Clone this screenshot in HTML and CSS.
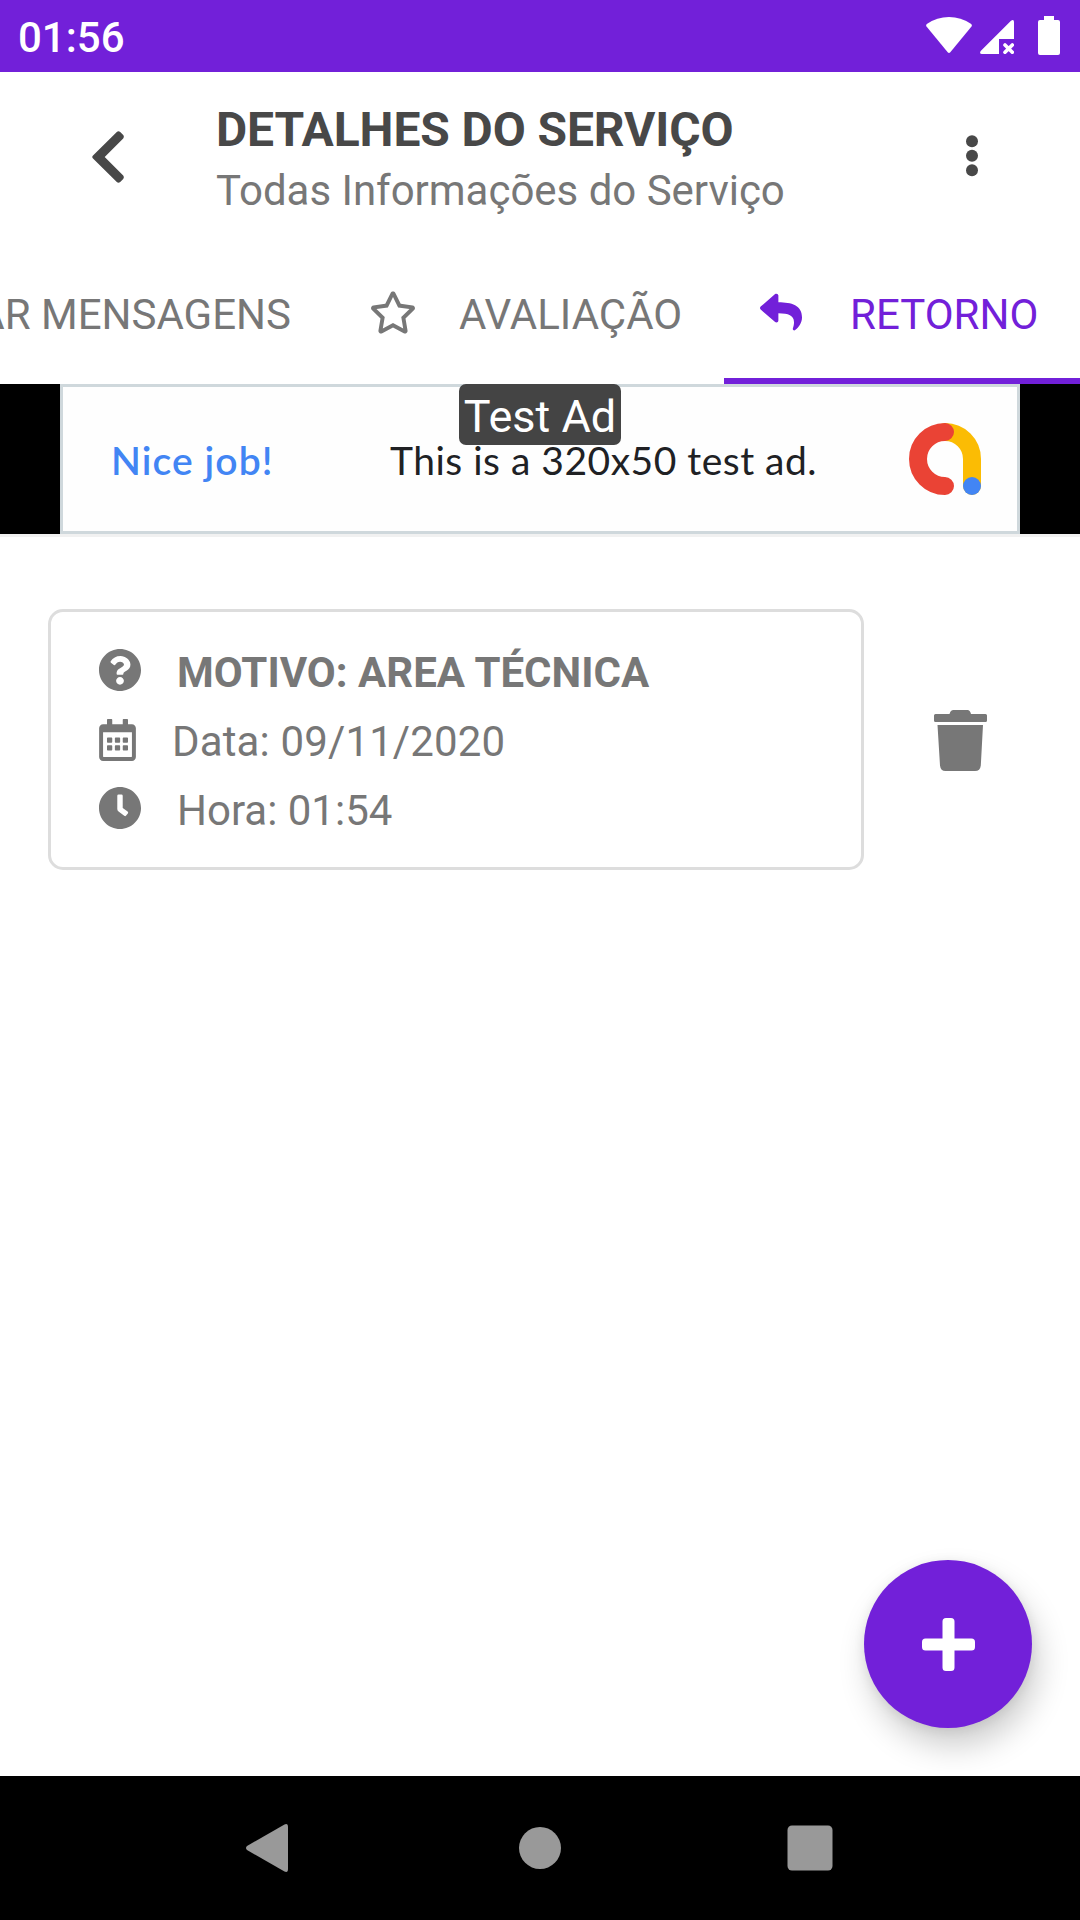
FILE: index.html
```html
<!DOCTYPE html>
<html lang="pt-BR">
<head>
<meta charset="utf-8">
<title>Detalhes do Serviço</title>
<link rel="stylesheet" href="styles.css">
</head>
<body>
<div class="screen">
  <div class="status">
    <span class="time">01:56</span>
    <svg class="wifi" width="46" height="37" viewBox="0 0 46 37"><path d="M.5 9.500Q-.5 8 1.200 6.800Q11 0 23 0T44.800 6.800Q46.500 8 45.500 9.500L24.300 35.300Q23 36.700 21.700 35.300Z"/></svg>
    <svg class="signal" width="34" height="34" viewBox="0 0 34 34"><path d="M31 .7Q34-1 34 2V19H19V34H2Q-1 34 .7 31Z"/><path class="cross" d="M25 25L32.300 32.300M32.300 25L25 32.300"/></svg>
    <svg class="battery" width="22" height="39" viewBox="0 0 22 39"><path d="M6 0H16V4H20Q22 4 22 6V37Q22 39 20 39H2Q0 39 0 37V6Q0 4 2 4H6Z"/></svg>
  </div>
  <header class="header">
    <svg class="back" width="32" height="52" viewBox="0 0 32 52"><path d="M24.800 .9Q26.500-.3 28.200 1L31.200 4Q32.500 5.600 31.200 7.400L12.700 26L31.200 44.600Q32.500 46.400 31.200 48L28.200 51Q26.500 52.300 24.800 51.100L1 27.600Q-.5 26 1 24.400Z"/></svg>
    <div class="titles">
      <h1>DETALHES DO SERVIÇO</h1>
      <p>Todas Informações do Serviço</p>
    </div>
    <svg class="more" width="12" height="42" viewBox="0 0 12 42"><circle cx="6" cy="6.200" r="6"/><circle cx="6" cy="20.700" r="6"/><circle cx="6" cy="35.200" r="6"/></svg>
  </header>
  <nav class="tabs">
    <div class="tab messages"><span>ENVIAR MENSAGENS</span></div>
    <div class="tab rating">
      <svg width="44" height="43" viewBox="20 0 536 512"><path d="M528.100 171.500L382 150.200 316.700 17.800c-11.700-23.600-45.600-23.900-57.400 0L194 150.200 47.900 171.500c-26.200 3.800-36.700 36.100-17.700 54.600l105.700 103-25 145.500c-4.500 26.300 23.200 46 46.400 33.700L288 439.600l130.700 68.700c23.200 12.200 50.900-7.400 46.400-33.700l-25-145.500 105.700-103c19-18.500 8.500-50.800-17.700-54.600zM388.600 312.300l23.700 138.400L288 385.400l-124.300 65.300 23.700-138.400-100.600-98 139-20.200 62.200-126 62.200 126 139 20.200-100.600 98z"/></svg>
      <span>AVALIAÇÃO</span>
    </div>
    <div class="tab return">
      <svg width="42" height="38" viewBox="0 32 512 448"><path d="M8.309 189.836L184.313 37.851C199.719 24.546 224 35.347 224 56.015v80.053c160.629 1.839 288 34.032 288 186.258 0 61.441-39.581 122.309-83.333 154.132-13.653 9.931-33.111-2.533-28.077-18.631 45.344-145.012-21.507-183.510-176.590-185.742V360c0 20.700-24.300 31.453-39.687 18.164l-176.004-152c-11.071-9.562-11.086-26.753 0-36.328z"/></svg>
      <span>RETORNO</span>
    </div>
  </nav>
  <div class="ad-strip">
    <div class="ad">
      <span class="nice">Nice job!</span>
      <span class="copy">This is a 320x50 test ad.</span>
      <svg class="admob" width="72" height="72" viewBox="0 0 72 72"><path class="yellow" d="M36 9A27 27 0 0 1 63 36V63"/><path class="red" d="M36 9A27 27 0 0 0 36 63"/><circle cx="63" cy="63" r="9"/></svg>
    </div>
    <div class="badge">Test Ad</div>
  </div>
  <main class="content">
    <section class="card">
      <div class="row bold"><svg width="42" height="42" viewBox="8 8 496 496"><path d="M504 256c0 136.997-111.043 248-248 248S8 392.997 8 256C8 119.083 119.043 8 256 8s248 111.083 248 248zM262.655 90c-54.497 0-89.255 22.957-116.549 63.758-3.536 5.286-2.353 12.415 2.715 16.258l34.699 26.310c5.205 3.947 12.621 3.008 16.665-2.122 17.864-22.658 30.113-35.797 57.303-35.797 20.429 0 45.698 13.148 45.698 32.958 0 14.976-12.363 22.667-32.534 33.976C247.128 238.528 216 254.941 216 296v4c0 6.627 5.373 12 12 12h56c6.627 0 12-5.373 12-12v-1.333c0-28.462 83.186-29.647 83.186-106.667 0-58.002-60.165-102-116.531-102zM256 338c-25.365 0-46 20.635-46 46 0 25.364 20.635 46 46 46s46-20.636 46-46c0-25.365-20.635-46-46-46z"/></svg><span>MOTIVO: AREA TÉCNICA</span></div>
      <div class="row date"><svg class="calendar" width="37" height="42" viewBox="0 0 448 512"><path d="M148 288h-40c-6.600 0-12-5.400-12-12v-40c0-6.600 5.400-12 12-12h40c6.600 0 12 5.400 12 12v40c0 6.600-5.400 12-12 12zm108-12v-40c0-6.600-5.400-12-12-12h-40c-6.600 0-12 5.400-12 12v40c0 6.600 5.400 12 12 12h40c6.600 0 12-5.400 12-12zm96 0v-40c0-6.600-5.400-12-12-12h-40c-6.600 0-12 5.400-12 12v40c0 6.600 5.400 12 12 12h40c6.600 0 12-5.400 12-12zm-96 96v-40c0-6.600-5.400-12-12-12h-40c-6.600 0-12 5.400-12 12v40c0 6.600 5.400 12 12 12h40c6.600 0 12-5.400 12-12zm-96 0v-40c0-6.600-5.400-12-12-12h-40c-6.600 0-12 5.400-12 12v40c0 6.600 5.400 12 12 12h40c6.600 0 12-5.400 12-12zm192 0v-40c0-6.600-5.400-12-12-12h-40c-6.600 0-12 5.400-12 12v40c0 6.600 5.400 12 12 12h40c6.600 0 12-5.400 12-12zm96-260v352c0 26.500-21.500 48-48 48H48c-26.500 0-48-21.500-48-48V112c0-26.500 21.500-48 48-48h48V12c0-6.600 5.400-12 12-12h40c6.600 0 12 5.400 12 12v52h128V12c0-6.600 5.400-12 12-12h40c6.600 0 12 5.400 12 12v52h48c26.500 0 48 21.500 48 48zm-48 346V160H48v298c0 3.300 2.700 6 6 6h340c3.300 0 6-2.700 6-6z"/></svg><span>Data: 09/11/2020</span></div>
      <div class="row"><svg width="42" height="42" viewBox="8 8 496 496"><path d="M256 8C119 8 8 119 8 256s111 248 248 248 248-111 248-248S393 8 256 8zm92.490 313l-20 25a16 16 0 0 1-22.490 2.500l-67-49.720a40 40 0 0 1-15-31.230V112a16 16 0 0 1 16-16h32a16 16 0 0 1 16 16v144l58 42.500a16 16 0 0 1 2.490 22.500z"/></svg><span>Hora: 01:54</span></div>
    </section>
    <svg class="trash" width="53" height="61" viewBox="0 0 53 61"><path d="M1.500 4H15.500Q16.500 0 19.500 0H33.500Q36 0 37 4H51.500Q53 4 53 5.500V10.500Q53 12 51.500 12H1.500Q0 12 0 10.500V5.500Q0 4 1.500 4ZM3.500 15H49L46.800 55.500Q46.200 61 41 61H11.500Q6.600 61 6 55.500Z"/></svg>
    <div class="fab"><svg width="53" height="53" viewBox="0 0 53 53"><path d="M24 0H29Q32.500 0 32.500 3.500V20.500H49.500Q53 20.500 53 24V29Q53 32.500 49.500 32.500H32.500V49.500Q32.500 53 29 53H24Q20.500 53 20.500 49.500V32.500H3.500Q0 32.500 0 29V24Q0 20.500 3.500 20.500H20.500V3.500Q20.500 0 24 0Z"/></svg></div>
  </main>
  <footer class="system-nav">
    <svg width="42" height="48" viewBox="0 0 42 48"><path d="M38.500 .5Q42-1 42 3V45Q42 49 38.500 47.500L1 26Q-1 24 1 22Z"/></svg>
    <svg class="home" width="42" height="42" viewBox="0 0 42 42"><circle cx="21" cy="21" r="21"/></svg>
    <svg width="46" height="46" viewBox="0 0 46 46"><rect x=".5" y=".5" width="45" height="45" rx="4.500"/></svg>
  </footer>
</div>
</body>
</html>
```
FILE: styles.css
```css
* { box-sizing: border-box; }
body { margin: 0; font-family: Roboto, sans-serif; color: #777; font-size: 42px; }
h1, p { margin: 0; }
svg { display: block; flex: none; fill: currentColor; }
.screen { width: 1080px; height: 1920px; display: flex; flex-direction: column; background: #fff; overflow: hidden; }

.status { height: 72px; flex: none; background: #7220d9; color: #fff; display: flex; padding: 0 20px 0 18px; align-items: flex-start; }
.time { font-weight: 500; line-height: 49px; margin: 13px auto 0 0; }
.wifi { margin: 17px 8px 0 0; }
.signal { margin: 20px 24px 0 0; }
.cross { stroke: #fff; stroke-width: 3.600; stroke-linecap: round; fill: none; }
.battery { margin-top: 16px; }

.header { height: 168px; flex: none; color: #484848; display: flex; align-items: flex-start; padding: 0 102px 0 92px; }
.back { margin-top: 59px; }
.titles { margin: 30px auto 0 92px; white-space: nowrap; }
.titles h1 { font-size: 48px; font-weight: 700; line-height: 56px; letter-spacing: -.1px; }
.titles p { line-height: 49px; margin-top: 8px; color: #777; letter-spacing: -.02px; }
.more { margin-top: 63px; }

.tabs { height: 144px; flex: none; display: flex; line-height: 49px; }
.tab { display: flex; align-items: center; white-space: nowrap; }
.tab span { padding-top: 4px; }
.messages { width: 291px; flex: none; justify-content: flex-end; }
.rating { width: 433px; padding-left: 80px; gap: 44px; }
.return { width: 356px; padding: 6px 0 0 36px; gap: 48px; color: #7220d9; border-bottom: 6px solid #7220d9; }

.ad-strip { position: relative; height: 150px; flex: none; background: #000; padding: 0 60px; }
.ad { height: 150px; background: #fefefe; border: 3px solid #cfd8dc; display: flex; align-items: center; padding: 0 36px 0 48px; font-family: Lato, sans-serif; font-size: 39px; white-space: nowrap; }
.ad span { padding-top: 2px; }
.nice { color: #4285f4; font-weight: 600; width: 279px; letter-spacing: 1.1px; }
.copy { color: #202124; letter-spacing: .5px; }
.admob { margin-left: auto; fill: none; stroke-width: 18; stroke-linecap: round; }
.admob .yellow { stroke: #fbbc04; }
.admob .red { stroke: #ea4335; }
.admob circle { fill: #4285f4; }
.badge { position: absolute; left: 459px; top: 0; width: 162px; height: 61px; border-radius: 7px; background: #444; color: #fff; font-size: 45px; line-height: 66px; text-align: center; white-space: nowrap; }

.content { flex: 1; position: relative; display: flex; align-items: flex-start; padding: 72px 48px 0; border-top: 3px solid #f1f1f1; }
.card { width: 816px; height: 261px; border: 3px solid #ddd; border-radius: 15px; padding: 26px 48px; }
.row { height: 69px; display: flex; align-items: center; gap: 36px; line-height: 49px; white-space: nowrap; }
.row svg { margin-bottom: 5px; }
.row .calendar { margin-bottom: 3px; }
.date { letter-spacing: .14px; }
.bold { font-weight: 700; }
.trash { margin: 101px 0 0 70px; }
.fab { position: absolute; right: 48px; bottom: 48px; width: 168px; height: 168px; border-radius: 50%; background: #7220d9; color: #fff; display: grid; place-items: center; box-shadow: 6px 18px 32px rgba(0,0,0,.2), 0 2px 12px rgba(0,0,0,.08); }

.system-nav { height: 144px; flex: none; background: #000; color: #999; display: flex; align-items: center; justify-content: space-between; padding: 0 247px 0 246px; }
.home { margin-left: 4px; }
```
